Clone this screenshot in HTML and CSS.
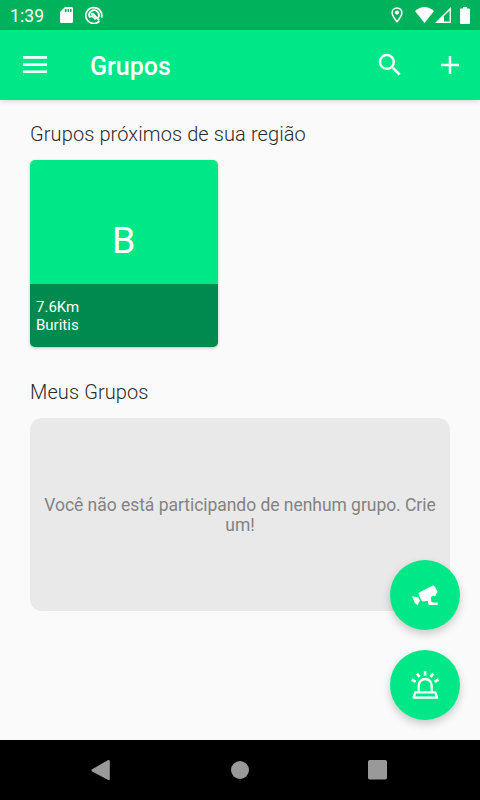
FILE: index.html
```html
<!DOCTYPE html>
<html lang="pt-BR">
<head>
<meta charset="utf-8">
<title>Grupos</title>
<link rel="stylesheet" href="styles.css">
</head>
<body>
<div class="screen">
  <div class="status">
    <span class="clock">1:39</span>
    <svg class="sd" width="14" height="16" viewBox="0 0 14 16"><path fill="#fff" fill-rule="evenodd" d="M5 0h6.500Q13 0 13 1.500v13Q13 16 11.500 16h-10Q0 16 0 14.500V5zM4.800 2v3h1.700V2zM7.500 2v3h1.500V2zM10 2v3h1.500V2z"/></svg>
    <svg class="app" width="18" height="18" viewBox="0 0 18 18" fill="none" stroke="#fff"><path stroke-width="1.700" d="M14.500 15.200A8 8 0 1 1 16.500 11.800"/><path stroke-width="1.800" d="M12.700 12.200A4.800 4.800 0 1 0 4.900 11.500M6 8.200L8 7.800 14.200 14.300M4.800 10.900L7.200 10 10.700 13.300"/></svg>
    <span class="spacer"></span>
    <svg class="pin" width="12" height="16" viewBox="0 0 12 16"><path fill="none" stroke="#fff" stroke-width="1.500" d="M6 14.700C3.500 11.700 1.100 8.700 1.100 5.800a4.900 4.900 0 0 1 9.800 0C10.900 8.700 8.500 11.700 6 14.700z"/><circle cx="6" cy="5.600" r="2.100" fill="#fff"/></svg>
    <svg class="wifi" width="19" height="16" viewBox="0 0 19 16"><path fill="#fff" d="M0 4Q9.500-3.800 19 4L9.500 16z"/></svg>
    <svg class="cell" width="16" height="16" viewBox="0 0 16 16"><path fill="#fff" fill-rule="evenodd" d="M16 0v16H0zM14.600 3.500L8.500 9.600v5h6.100z"/><path fill="#fff" d="M9 9v6H3z"/></svg>
    <svg class="battery" width="10" height="17" viewBox="0 0 10 17"><path fill="#fff" d="M3 0h4v1.500h2q1 0 1 1V16q0 1-1 1H1q-1 0-1-1V2.500q0-1 1-1h2z"/></svg>
  </div>
  <header class="bar">
    <svg width="24" height="18" viewBox="0 0 24 18"><path fill="#fff" d="M0 0h24v2.700H0zM0 7.200h24v2.700H0zM0 14.400h24v2.700H0z"/></svg>
    <h1>Grupos</h1>
    <svg class="search" width="30" height="30" viewBox="0 0 24 24"><path fill="#fff" d="M15.500 14h-.79l-.28-.27A6.471 6.471 0 0 0 16 9.500 6.500 6.500 0 1 0 9.500 16c1.610 0 3.090-.59 4.230-1.570l.27.280v.79l5 4.990L20.490 19l-4.990-5zm-6 0C7.010 14 5 11.990 5 9.500S7.010 5 9.500 5 14 7.010 14 9.500 11.990 14 9.500 14z"/></svg>
    <svg width="30" height="30" viewBox="0 0 24 24"><path fill="#fff" d="M19.200 13h-6.200v6.200h-2V13H4.800v-2H11V4.800h2V11h6.200z"/></svg>
  </header>
  <main>
    <h2>Grupos próximos de sua região</h2>
    <article class="card">
      <div class="initial">B</div>
      <div class="info"><span>7.6Km</span><span>Buritis</span></div>
    </article>
    <h2 class="mine">Meus Grupos</h2>
    <div class="empty">Você não está participando de nenhum grupo. Crie um!</div>
    <div class="fabs">
      <div class="fab">
        <svg width="30" height="30" viewBox="0 0 30 30" fill="#fff"><path d="M9.600 12.200L22 5.900q1.800-.8 2.700.7l2.500 4.400q.8 1.500-.3 2.300l-1.100.7.400 1.200-1.700 1.100-.9-.7-2.600 1.500v2.700q0 2.600 1.800 2.600h4.900V25H20q-1.500 0-1.700-1.600l-.5-2.700-4 .8q-1.400.3-2.400-1.200L8.700 14.700q-.7-1.700.9-2.500z"/><path d="M2 16.300l6 .9 2 3.400L7.600 25.300q-3.300-1.600-3.800-4.900z"/></svg>
      </div>
      <div class="fab">
        <svg width="30" height="30" viewBox="0 0 30 30" fill="none" stroke="#fff" stroke-width="2.300" stroke-linecap="round" stroke-linejoin="round"><path d="M8.700 21.500v-6a6.500 6.500 0 0 1 13 0v6M5.300 22.300h20l1.800 5.300H3.500z"/><path stroke-linecap="butt" stroke-width="2.600" d="M15.100 1.300v4.500M7 3.500l2.600 3.400M23.200 3.500l-2.600 3.400M1.700 9.500l4 2.300M28.500 9.500l-4 2.300"/></svg>
      </div>
    </div>
  </main>
  <nav class="nav">
    <svg width="19" height="21" viewBox="0 0 19 21"><path fill="#999" d="M.8 9.400L16.800.2Q18.800-.4 18.800 1.300v17.900q0 1.500-1.600.8L.8 11.200q-.8-.8 0-1.800z"/></svg>
    <svg class="home" width="18" height="18" viewBox="0 0 18 18"><circle cx="9" cy="9" r="9" fill="#999"/></svg>
    <svg width="19" height="20" viewBox="0 0 19 20"><rect width="19" height="19.500" rx="1.800" fill="#999"/></svg>
  </nav>
</div>
</body>
</html>
```
FILE: styles.css
```css
* { box-sizing: border-box; }
body { margin: 0; font-family: Roboto, sans-serif; background: #fafafa; }
svg { display: block; flex: none; }
.screen { width: 480px; height: 800px; display: flex; flex-direction: column; overflow: hidden; }
.status { height: 30px; flex: none; background: #00b25b; display: flex; align-items: center; padding: 0 10px; color: #fff; }
.clock { font-size: 17.500px; line-height: 30px; width: 50px; letter-spacing: .1px; padding-top: 1px; }
.app { margin-left: 11px; }
.spacer { flex: 1; }
.wifi { margin-left: 12px; }
.cell { margin-left: 1px; }
.battery { margin-left: 9px; }
.bar { height: 70px; flex: none; background: #00e787; display: flex; align-items: center; padding: 0 15px 0 23px; box-shadow: 0 1px 5px rgba(0,0,0,.16); position: relative; }
.bar h1 { margin: 0 auto 0 43px; padding-top: 4px; color: #fff; font-size: 25px; font-weight: 500; line-height: 30px; }
.search { margin-right: 30px; }
main { flex: 1; padding: 22px 30px 0; position: relative; }
h2 { margin: 0; font-size: 20px; line-height: 25px; font-weight: 300; color: #2c2c2c; letter-spacing: .1px; }
.card { margin-top: 12.700px; width: 187.500px; height: 187.300px; border-radius: 5px; overflow: hidden; background: #00e787; color: #fff; display: flex; flex-direction: column; box-shadow: 0 1px 3px rgba(0,0,0,.24); }
.initial { height: 124.500px; padding-top: 37px; text-align: center; font-size: 37.500px; line-height: 86px; }
.info { flex: 1; background: #008a50; display: flex; flex-direction: column; justify-content: center; padding: 2px 0 0 6px; font-size: 15px; line-height: 17.500px; }
.mine { margin-top: 33.500px; }
.empty { margin-top: 12.500px; height: 193px; border-radius: 12px; background: #e9e9e9; color: #838383; display: flex; align-items: center; text-align: center; padding: 2px 10px 0; font-size: 17.500px; line-height: 20.500px; letter-spacing: -.04px; }
.empty { justify-content: center; }
.fabs { position: absolute; right: 20px; bottom: 20px; display: flex; flex-direction: column; gap: 20px; }
.fab { width: 70px; height: 70px; border-radius: 50%; background: #00e787; display: flex; align-items: center; justify-content: center; box-shadow: 0 4px 8px rgba(0,0,0,.2); }
.nav { height: 60px; flex: none; background: #000; display: flex; align-items: center; justify-content: space-between; padding: 0 93px 0 91px; }
.home { margin-left: 2px; }
```
